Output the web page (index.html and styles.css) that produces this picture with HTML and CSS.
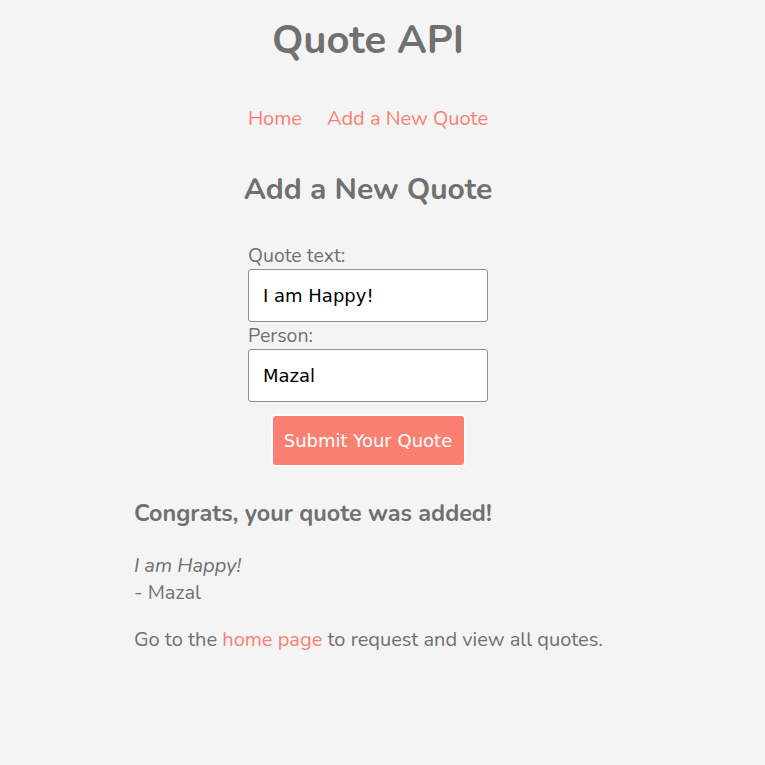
FILE: index.html
```html
<!DOCTYPE html>
<html>
<head>
<meta charset="utf-8">
<link rel="stylesheet" href="styles.css">
</head>
<body>
  <header class="top">
    <h1 class="title">Quote API</h1>
    <nav class="nav">
      <a href="#">Home</a>
      <a href="#">Add a New Quote</a>
    </nav>
    <h2 class="subtitle">Add a New Quote</h2>
    <form class="form">
      <label class="label" for="q">Quote text:</label>
      <input class="field" id="q" type="text" value="I am Happy!">
      <label class="label" for="p">Person:</label>
      <input class="field" id="p" type="text" value="Mazal">
      <button class="submit" type="button">Submit Your Quote</button>
    </form>
  </header>
  <main class="result">
    <h3 class="congrats">Congrats, your quote was added!</h3>
    <p class="quote"><em>I am Happy!</em><br>- Mazal</p>
    <p class="info">Go to the <a href="#">home page</a> to request and view all quotes.</p>
  </main>
</body>
</html>
```
FILE: styles.css
```css
html, body {
  margin: 0;
  padding: 0;
  background: #f4f4f4;
}
body {
  font-family: "Nunito", "Lato", sans-serif;
  color: #707070;
  font-size: 20px;
}
a {
  color: #fa8072;
  text-decoration: none;
}
.top {
  width: 736px;
  display: flex;
  flex-direction: column;
  align-items: center;
}
.title {
  margin: 14px 0 0;
  font-size: 40px;
  line-height: 52px;
  font-weight: 700;
}
.nav {
  margin-top: 40px;
  display: flex;
  gap: 25px;
  font-size: 20px;
  line-height: 26px;
}
.subtitle {
  margin: 40px 0 0;
  font-size: 30px;
  line-height: 36px;
  font-weight: 700;
}
.form {
  margin-top: 34px;
  width: 240px;
  display: flex;
  flex-direction: column;
  align-items: stretch;
}
.label {
  font-size: 19.5px;
  line-height: 26px;
  margin-top: 1px;
}
.field {
  box-sizing: border-box;
  height: 53px;
  margin: 0;
  padding: 0 14px;
  border: 1px solid #8f8f94;
  border-radius: 3px;
  background: #fff;
  font-family: "DejaVu Sans", sans-serif;
  font-size: 18px;
  color: #000;
}
.submit {
  box-sizing: border-box;
  align-self: center;
  margin-top: 12px;
  width: 195px;
  height: 53px;
  border: 2px solid #fff;
  border-radius: 5px;
  background: #fa8072;
  color: #fff;
  font-family: "DejaVu Sans", sans-serif;
  font-size: 18px;
}
.result {
  width: 497px;
  margin: 31px auto 0;
}
.congrats {
  margin: 0;
  font-size: 23.4px;
  line-height: 30px;
  font-weight: 700;
}
.quote {
  margin: 24px 0 0;
  line-height: 27px;
}
.info {
  margin: 20px 0 0;
  line-height: 27px;
}
```
